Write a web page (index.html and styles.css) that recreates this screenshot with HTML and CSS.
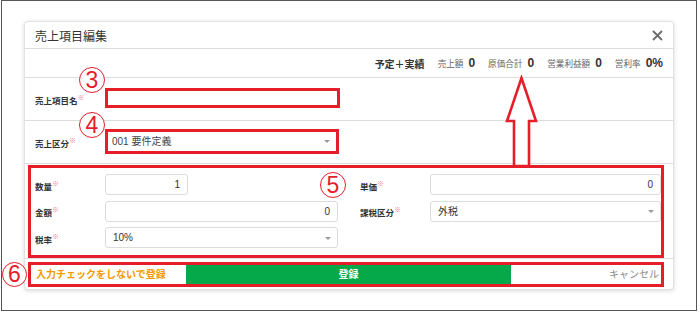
FILE: index.html
```html
<!DOCTYPE html>
<html lang="ja">
<head>
  <meta charset="UTF-8">
  <title>売上項目編集</title>
  <link rel="stylesheet" href="styles.css">
</head>
<body>
  <div class="frame">
    <div class="dialog">
      <div class="dialog-header">
        <h3>売上項目編集</h3>
        <svg class="close" width="11" height="11" viewBox="0 0 11 11">
          <path d="M1 1 L10 10 M10 1 L1 10" stroke="#6b6b6b" stroke-width="1.8" fill="none"/>
        </svg>
      </div>

      <div class="summary">
        <span class="summary-title">予定＋実績</span>
        <span class="sum-label">売上額</span><span class="sum-value">0</span>
        <span class="sum-label">原価合計</span><span class="sum-value">0</span>
        <span class="sum-label">営業利益額</span><span class="sum-value">0</span>
        <span class="sum-label">営利率</span><span class="sum-value last">0%</span>
      </div>

      <div class="row">
        <label class="label">売上項目名<sup>※</sup></label>
        <div class="field marked name-field"></div>
      </div>

      <div class="row">
        <label class="label">売上区分<sup>※</sup></label>
        <div class="field marked select-field">001 要件定義<span class="caret"></span></div>
      </div>

      <div class="detail">
        <label class="label">数量<sup>※</sup></label>
        <div class="input num short">1</div>
        <label class="label right-label">単価<sup>※</sup></label>
        <div class="input num">0</div>

        <label class="label">金額<sup>※</sup></label>
        <div class="input num">0</div>
        <label class="label right-label">課税区分<sup>※</sup></label>
        <div class="input select">外税<span class="caret"></span></div>

        <label class="label">税率<sup>※</sup></label>
        <div class="input select">10%<span class="caret"></span></div>
      </div>

      <div class="dialog-footer">
        <div class="footer-box">
          <span class="skip-btn">入力チェックをしないで登録</span>
          <span class="save-btn">登録</span>
          <span class="cancel-btn">キャンセル</span>
        </div>
      </div>
    </div>

    <span class="num-mark m3">3</span>
    <span class="num-mark m4">4</span>
    <span class="num-mark m5">5</span>
    <span class="num-mark m6">6</span>

    <svg class="arrow" width="36" height="94" viewBox="0 0 36 94">
      <path d="M18.5 3 L4 46 L11 46 L11 91 L26 91 L26 46 L33 46 Z" stroke="#e61e2a" stroke-width="2.6" fill="#fff" stroke-linejoin="miter"/>
    </svg>
  </div>
</body>
</html>
```

FILE: styles.css
```css
* {
  margin: 0;
  padding: 0;
  box-sizing: border-box;
  font-family: "Liberation Sans", "Noto Sans CJK JP", sans-serif;
}

body {
  background: #fff;
}

.frame {
  position: relative;
  margin-left: 1px;
  width: 696px;
  height: 311px;
  border: 1px solid #555;
  padding: 20px 0 0 22px;
}

.dialog {
  width: 650px;
  height: 269px;
  border: 1px solid #e2e2e2;
  border-radius: 4px;
  box-shadow: 0 1px 4px rgba(0, 0, 0, 0.15);
  background: #fff;
}

.dialog-header {
  height: 27px;
  border-bottom: 1px solid #ddd;
  display: flex;
  align-items: center;
  justify-content: space-between;
  padding: 0 10px 0 10px;
}

.dialog-header h3 {
  font-size: 12px;
  font-weight: normal;
  color: #333;
}

.close {
  margin-top: 1px;
}

.summary {
  height: 29px;
  border-bottom: 1px solid #ddd;
  display: flex;
  justify-content: flex-end;
  align-items: center;
  padding-right: 10px;
  color: #333;
}

.summary-title {
  font-size: 10px;
  font-weight: bold;
  margin-right: 13px;
}

.sum-label {
  font-size: 8.6px;
  color: #666;
  margin-right: 5px;
}

.sum-value {
  font-size: 12px;
  font-weight: bold;
  margin-right: 13px;
}

.sum-value.last {
  margin-right: 0;
}

.row {
  height: 43px;
  border-bottom: 1px solid #ddd;
  display: flex;
  align-items: center;
  padding-left: 10px;
}

.label {
  width: 70px;
  font-size: 8.5px;
  font-weight: bold;
  color: #333;
}

.label sup {
  font-size: 7px;
  font-weight: normal;
  color: #f07890;
  vertical-align: 4px;
}

.field {
  position: relative;
  background: #fff;
  font-size: 10px;
  color: #444;
}

.marked {
  border: 3px solid #e61e2a;
}

.name-field {
  width: 235px;
  height: 20px;
  margin-top: -2px;
}

.select-field {
  width: 234px;
  height: 25px;
  padding-left: 4px;
  line-height: 19px;
  margin-top: -2px;
}

.caret {
  position: absolute;
  right: 6px;
  top: 50%;
  margin-top: -1px;
  border-left: 3px solid transparent;
  border-right: 3px solid transparent;
  border-top: 3px solid #999;
}

.detail {
  margin: 1px 9px 0 3px;
  height: 93px;
  border: 3px solid #e61e2a;
  padding: 6px 0 0 4px;
  display: grid;
  grid-template-columns: 70px 233px 92px 1fr;
  grid-auto-rows: 21px;
  row-gap: 5.5px;
  align-items: center;
}

.right-label {
  width: auto;
  padding-left: 22px;
}

.input {
  position: relative;
  height: 21px;
  border: 1px solid #dcdcdc;
  border-radius: 3px;
  background: #fff;
  font-size: 10px;
  color: #333;
  line-height: 19px;
  padding: 0 7px;
}

.input.num {
  text-align: right;
}

.input.short {
  width: 83px;
}

.input.select {
  padding-left: 7px;
}

.dialog-footer {
  border-top: 1px solid #ddd;
  padding: 3px 9px 2px 3px;
}

.footer-box {
  height: 25px;
  border: 3px solid #e61e2a;
  display: flex;
  align-items: stretch;
  font-size: 10px;
  font-weight: bold;
}

.skip-btn {
  width: 155px;
  padding-left: 5px;
  color: #f39800;
  line-height: 19px;
}

.save-btn {
  width: 325px;
  background: #06a94a;
  color: #fff;
  text-align: center;
  line-height: 19px;
}

.cancel-btn {
  flex: 1;
  text-align: right;
  padding-right: 2px;
  color: #888;
  font-weight: normal;
  line-height: 19px;
}

.num-mark {
  position: absolute;
  width: 26px;
  height: 26px;
  border: 1.3px solid #e61e2a;
  border-radius: 50%;
  background: #fff;
  color: #e61e2a;
  font-size: 23px;
  line-height: 24px;
  text-align: center;
  font-family: "Liberation Sans", sans-serif;
}

.m3 { left: 77px; top: 66px; }
.m4 { left: 77px; top: 111px; }
.m5 { left: 318px; top: 171px; }
.m6 { left: 0; top: 261px; width: 25px; height: 25px; line-height: 23px; }

.arrow {
  position: absolute;
  left: 501px;
  top: 74px;
}
```
